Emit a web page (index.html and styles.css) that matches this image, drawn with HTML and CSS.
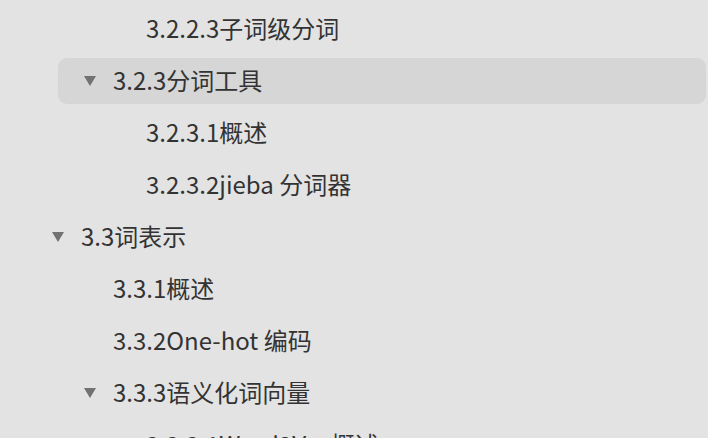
FILE: index.html
```html
<!DOCTYPE html>
<html>
<head>
<meta charset="utf-8">
<link rel="stylesheet" href="styles.css">
</head>
<body>
<ul class="toc">
  <li class="row l4"><span class="label">3.2.2.3子词级分词</span></li>
  <li class="row l3 active"><span class="caret"></span><span class="label">3.2.3分词工具</span></li>
  <li class="row l4"><span class="label">3.2.3.1概述</span></li>
  <li class="row l4"><span class="label">3.2.3.2jieba 分词器</span></li>
  <li class="row l2"><span class="caret"></span><span class="label">3.3词表示</span></li>
  <li class="row l3"><span class="label">3.3.1概述</span></li>
  <li class="row l3"><span class="label">3.3.2One-hot 编码</span></li>
  <li class="row l3"><span class="caret"></span><span class="label">3.3.3语义化词向量</span></li>
  <li class="row l4"><span class="label">3.3.3.1Word2Vec概述</span></li>
</ul>
</body>
</html>
```
FILE: styles.css
```css
html, body {
  margin: 0;
  padding: 0;
  background: #e3e3e3;
  overflow: hidden;
}
body {
  width: 708px;
  height: 438px;
  font-family: "Noto Sans CJK SC", "Noto Sans", sans-serif;
  color: #333333;
}
.toc {
  list-style: none;
  margin: 0;
  padding: 6px 2px 0 58px;
  display: flex;
  flex-direction: column;
  gap: 6px;
}
.row {
  height: 46px;
  display: flex;
  align-items: center;
  font-size: 24px;
  line-height: 1;
  border-radius: 9px;
  white-space: nowrap;
}
.row.active {
  background: #d6d6d6;
}
.l2 { padding-left: 23px; }
.l3 { padding-left: 55px; }
.l4 { padding-left: 88px; }
.caret {
  width: 0;
  height: 0;
  border-left: 6px solid transparent;
  border-right: 6px solid transparent;
  border-top: 10px solid #727272;
  margin-left: -29px;
  margin-right: 17px;
  flex: none;
}
.label {
  position: relative;
  top: -1px;
}
```
